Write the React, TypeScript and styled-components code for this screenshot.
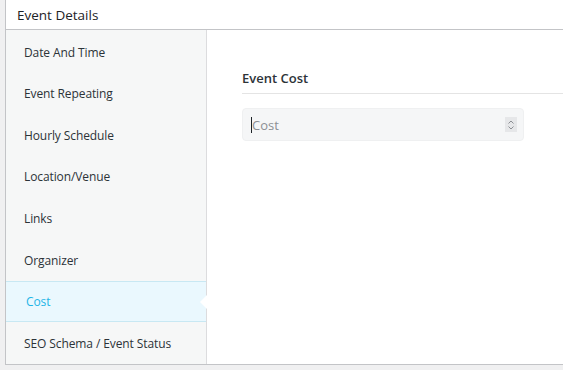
import React from 'react'
import styled, { createGlobalStyle } from 'styled-components'

const GlobalStyle = createGlobalStyle`
  html, body {
    margin: 0;
    padding: 0;
    background: #f0f0f1;
    font-family: 'Open Sans', 'Noto Sans', sans-serif;
  }
`

const tabs = [
  'Date And Time',
  'Event Repeating',
  'Hourly Schedule',
  'Location/Venue',
  'Links',
  'Organizer',
  'Cost',
  'SEO Schema / Event Status',
]

const App = () => {
  return (
    <>
      <GlobalStyle />
      <Page>
        <Panel>
          <Header>Event Details</Header>
          <Body>
            <Sidebar>
              {tabs.map((tab) => (
                <Tab key={tab} active={tab === 'Cost'}>
                  {tab}
                </Tab>
              ))}
            </Sidebar>
            <Content>
              <SectionTitle>Event Cost</SectionTitle>
              <Field>
                <Placeholder>Cost</Placeholder>
                <Spinner>
                  <svg width="8" height="12" viewBox="0 0 8 12" fill="none">
                    <path d="M1.5 4.5 4 2l2.5 2.5M1.5 7.5 4 10l2.5-2.5" stroke="#8c8f94" strokeWidth="1" />
                  </svg>
                </Spinner>
              </Field>
            </Content>
          </Body>
        </Panel>
      </Page>
    </>
  )
}

export default App

const Page = styled.div`
  padding: 0 0 5px 5px;
  height: 370px;
  box-sizing: border-box;
`

const Panel = styled.div`
  display: flex;
  flex-direction: column;
  height: 100%;
  background: #fff;
  border: 1px solid #c3c4c7;
  border-top: none;
  border-right: none;
  box-sizing: border-box;
`

const Header = styled.div`
  height: 33px;
  display: flex;
  align-items: center;
  padding-left: 11px;
  font-size: 13.5px;
  color: #1d2327;
  border-bottom: 1px solid #c3c4c7;
  box-sizing: border-box;
`

const Body = styled.div`
  display: flex;
  flex: 1;
`

const Sidebar = styled.div`
  width: 200px;
  background: #f6f7f7;
  border-right: 1px solid #dcdcde;
  display: flex;
  flex-direction: column;
  padding-top: 1px;
`

const Tab = styled.div<{ active?: boolean }>`
  position: relative;
  height: 41.6px;
  display: flex;
  align-items: center;
  padding-left: ${({ active }) => (active ? '20px' : '18px')};
  font-size: 12px;
  color: ${({ active }) => (active ? '#1eb5e6' : '#2c3338')};
  background: ${({ active }) => (active ? '#eaf8fe' : 'transparent')};
  border-top: 1px solid ${({ active }) => (active ? '#c8e8f3' : 'transparent')};
  border-bottom: 1px solid ${({ active }) => (active ? '#c8e8f3' : 'transparent')};
  box-sizing: border-box;
  letter-spacing: -0.1px;

  &::after {
    content: '';
    display: ${({ active }) => (active ? 'block' : 'none')};
    position: absolute;
    right: -1px;
    top: 50%;
    margin-top: -7px;
    border-style: solid;
    border-width: 7px 7px 7px 0;
    border-color: transparent #fff transparent transparent;
  }
`

const Content = styled.div`
  flex: 1;
  padding: 39px 0 0 35px;
`

const SectionTitle = styled.div`
  font-size: 13px;
  font-weight: 600;
  color: #2c3338;
  padding-bottom: 6px;
  border-bottom: 1px solid #e4e4e4;
`

const Field = styled.div`
  margin-top: 14px;
  width: 282px;
  height: 33px;
  box-sizing: border-box;
  background: #f5f6f7;
  border: 1px solid #eff0f1;
  border-radius: 4px;
  display: flex;
  align-items: center;
  justify-content: space-between;
  padding: 0 6px 0 8px;
`

const Placeholder = styled.span`
  font-size: 13px;
  color: #8c8f94;
  border-left: 1px solid #1d2327;
  padding-left: 0;
  line-height: 16px;
`

const Spinner = styled.span`
  width: 12px;
  height: 15px;
  background: #e6e7e9;
  display: flex;
  align-items: center;
  justify-content: center;
`
